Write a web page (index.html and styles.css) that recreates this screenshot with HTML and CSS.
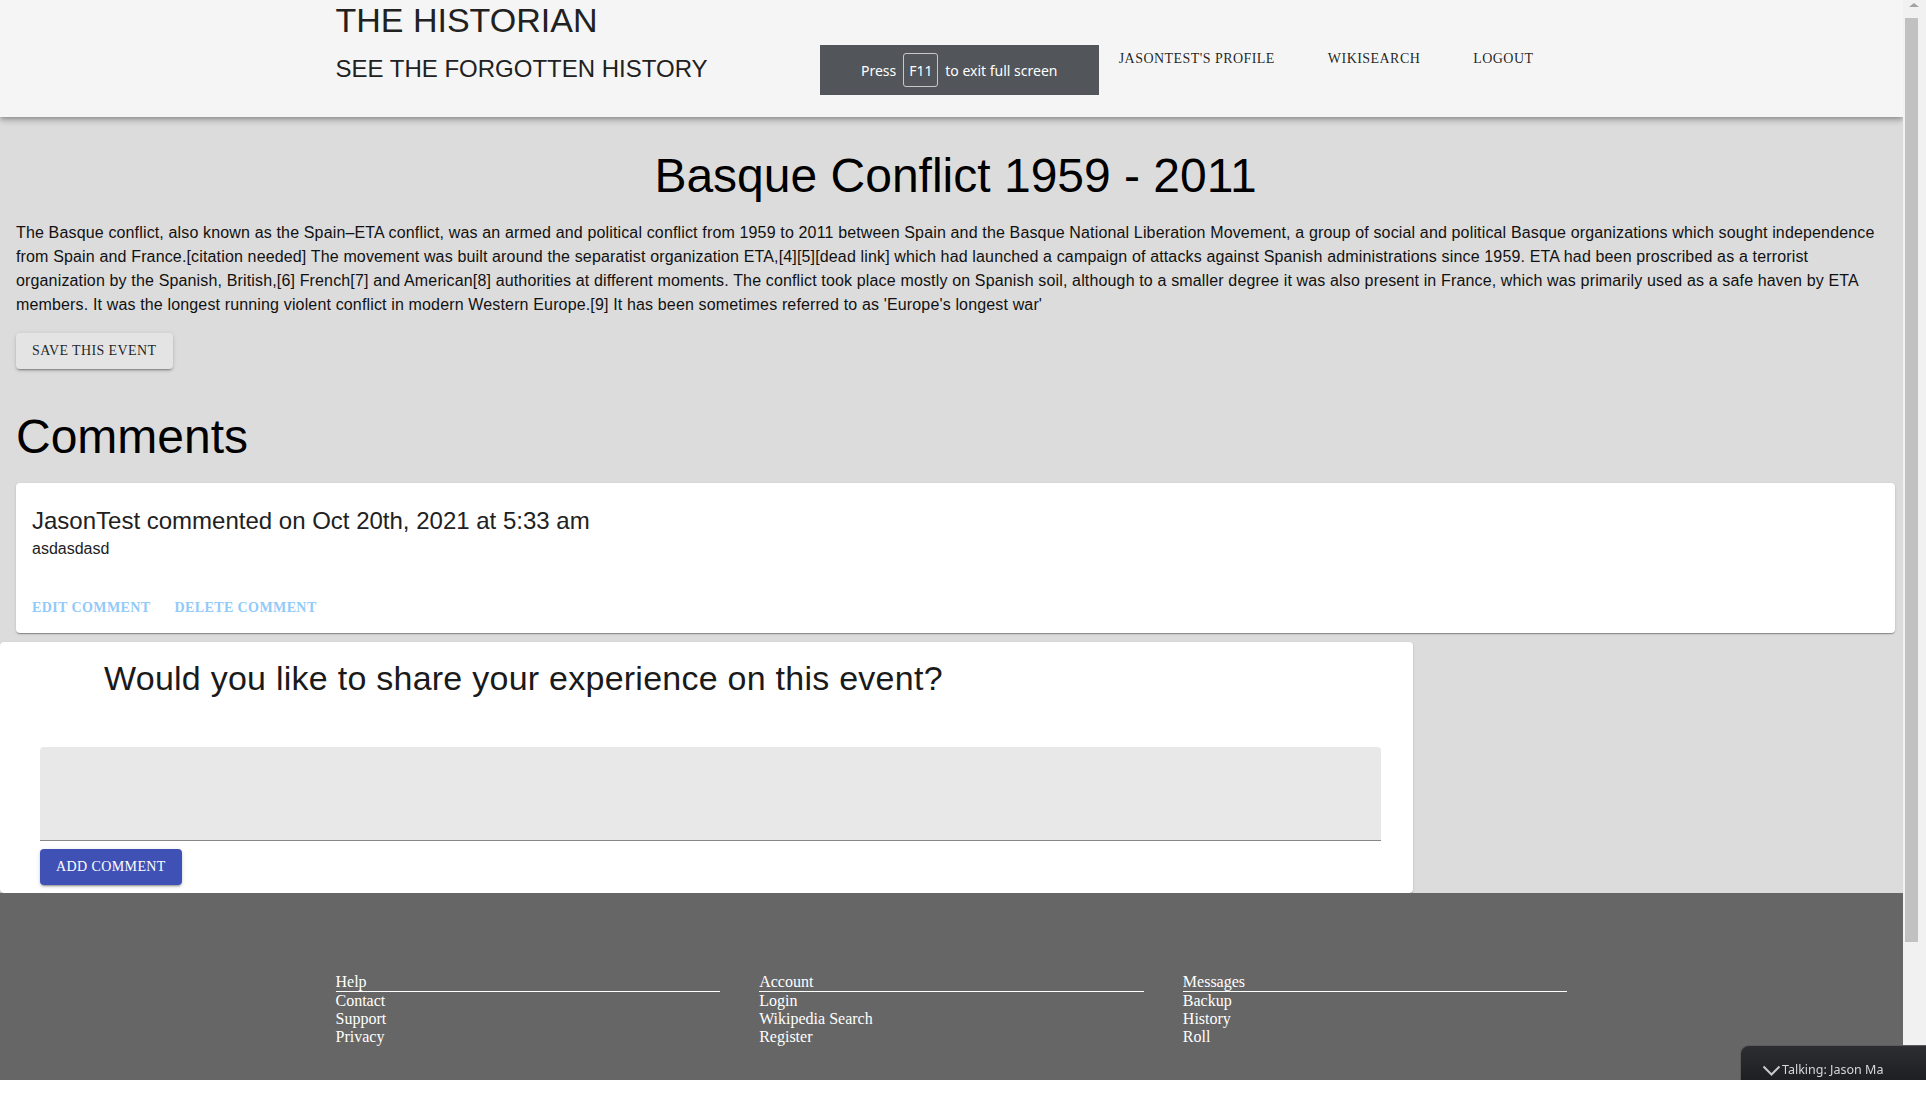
FILE: index.html
```html
<!DOCTYPE html>
<html lang="en">
<head>
<meta charset="utf-8">
<title>The Historian</title>
<link rel="stylesheet" href="styles.css">
</head>
<body>
<div class="page">
  <header class="appbar">
    <div class="container header-inner">
      <div class="brand">
        <h4 class="brand-title">THE HISTORIAN</h4>
        <h5 class="brand-sub">SEE THE FORGOTTEN HISTORY</h5>
      </div>
      <nav class="nav">
        <a class="nav-btn" href="#">Jasontest's Profile</a>
        <a class="nav-btn" href="#">Wikisearch</a>
        <a class="nav-btn" href="#">Logout</a>
      </nav>
    </div>
  </header>

  <main class="main">
    <h3 class="event-title">Basque Conflict 1959 - 2011</h3>
    <p class="event-desc">The Basque conflict, also known as the Spain–ETA conflict, was an armed and political conflict from 1959 to 2011 between Spain and the Basque National Liberation Movement, a group of social and political Basque organizations which sought independence from Spain and France.[citation needed] The movement was built around the separatist organization ETA,[4][5][dead link] which had launched a campaign of attacks against Spanish administrations since 1959. ETA had been proscribed as a terrorist organization by the Spanish, British,[6] French[7] and American[8] authorities at different moments. The conflict took place mostly on Spanish soil, although to a smaller degree it was also present in France, which was primarily used as a safe haven by ETA members. It was the longest running violent conflict in modern Western Europe.[9] It has been sometimes referred to as 'Europe's longest war'</p>
    <button class="btn-save">Save this event</button>

    <h3 class="comments-title">Comments</h3>
    <div class="card comment-card">
      <div class="comment-content">
        <h5 class="comment-head">JasonTest commented on Oct 20th, 2021 at 5:33 am</h5>
        <p class="comment-body">asdasdasd</p>
      </div>
      <div class="comment-actions">
        <button class="btn-text">Edit comment</button>
        <button class="btn-text">Delete comment</button>
      </div>
    </div>
  </main>

  <section class="card form-card">
    <h4 class="form-title">Would you like to share your experience on this event?</h4>
    <div class="field"><textarea class="field-input" aria-label="comment"></textarea></div>
    <button class="btn-primary">Add comment</button>
  </section>

  <footer class="footer">
    <div class="container footer-grid">
      <div class="footer-col">
        <div class="footer-head">Help</div>
        <a href="#">Contact</a>
        <a href="#">Support</a>
        <a href="#">Privacy</a>
      </div>
      <div class="footer-col">
        <div class="footer-head">Account</div>
        <a href="#">Login</a>
        <a href="#">Wikipedia Search</a>
        <a href="#">Register</a>
      </div>
      <div class="footer-col">
        <div class="footer-head">Messages</div>
        <a href="#">Backup</a>
        <a href="#">History</a>
        <a href="#">Roll</a>
      </div>
    </div>
  </footer>
</div>

<div class="fs-bubble">
  <span>Press</span>
  <span class="fs-key">F11</span>
  <span>to exit full screen</span>
</div>

<div class="scrollbar">
  <div class="sb-arrow"></div>
  <div class="sb-thumb"></div>
</div>

<div class="talk-widget">
  <svg class="talk-chevron" width="19" height="11" viewBox="0 0 19 11"><polyline points="1.5,1.5 9.5,9.5 17.5,1.5" fill="none" stroke="#c9c9c9" stroke-width="2"/></svg>
  <span>Talking: Jason Ma</span>
</div>
</body>
</html>
```

FILE: styles.css
```css
* { box-sizing: border-box; }

html, body {
  margin: 0;
  padding: 0;
  background: #ffffff;
}

body {
  font-family: "Liberation Sans", Arial, sans-serif;
  color: rgba(0, 0, 0, 0.87);
}

.page {
  width: calc(100% - 23px);
  background: #dcdcdc;
}

.container {
  max-width: 1280px;
  margin: 0 auto;
  padding: 0 24px;
}

/* Header */
.appbar {
  position: relative;
  z-index: 2;
  height: 117px;
  background: #f5f5f5;
  box-shadow: 0 2px 4px -1px rgba(0,0,0,0.2), 0 4px 5px 0 rgba(0,0,0,0.14), 0 1px 10px 0 rgba(0,0,0,0.12);
}

.header-inner {
  display: flex;
  align-items: flex-start;
}

.brand-title {
  margin: -1px 0 0;
  font-size: 34px;
  font-weight: 400;
  line-height: 42px;
  color: #212121;
}

.brand-sub {
  margin: 12px 0 0;
  font-size: 24px;
  font-weight: 400;
  line-height: 32px;
  color: #212121;
}

.nav {
  display: flex;
  margin-left: auto;
  margin-right: 26px;
  margin-top: 41px;
  gap: 37px;
}

.nav-btn {
  display: block;
  padding: 6px 8px;
  font-family: "Liberation Serif", "Times New Roman", serif;
  font-size: 14px;
  line-height: 24px;
  letter-spacing: 0.45px;
  text-transform: uppercase;
  text-decoration: none;
  color: rgba(0, 0, 0, 0.87);
}

/* Main */
.main {
  padding: 31px 8px 0 16px;
}

.event-title {
  margin: 0;
  text-align: center;
  font-size: 48px;
  font-weight: 400;
  line-height: 56px;
  color: #000;
}

.event-desc {
  margin: 17px 0 0;
  font-size: 16px;
  line-height: 24px;
  letter-spacing: 0.15px;
  color: #111;
}

.btn-save {
  display: block;
  margin-top: 16px;
  height: 36px;
  padding: 6px 16px;
  border: 0;
  border-radius: 4px;
  background: #e4e4e4;
  font-family: "Liberation Serif", "Times New Roman", serif;
  font-size: 14px;
  line-height: 24px;
  letter-spacing: 0.4px;
  text-transform: uppercase;
  color: rgba(0, 0, 0, 0.87);
  box-shadow: 0 3px 1px -2px rgba(0,0,0,0.2), 0 2px 2px 0 rgba(0,0,0,0.14), 0 1px 5px 0 rgba(0,0,0,0.12);
}

.comments-title {
  margin: 40px 0 0;
  font-size: 48px;
  font-weight: 400;
  line-height: 56px;
  color: #000;
}

.card {
  background: #fff;
  border-radius: 4px;
  box-shadow: 0 2px 1px -1px rgba(0,0,0,0.2), 0 1px 1px 0 rgba(0,0,0,0.14), 0 1px 3px 0 rgba(0,0,0,0.12);
}

.comment-card {
  margin-top: 18px;
  height: 150px;
}

.comment-content {
  padding: 22px 16px 20px;
}

.comment-head {
  margin: 0;
  font-size: 24px;
  font-weight: 400;
  line-height: 32px;
  color: #212121;
}

.comment-body {
  margin: 0;
  font-size: 16px;
  line-height: 24px;
  color: #212121;
}

.comment-actions {
  display: flex;
  gap: 8px;
  padding: 8px;
}

.btn-text {
  height: 36px;
  padding: 7px 8px 5px;
  border: 0;
  background: transparent;
  font-family: "Liberation Serif", "Times New Roman", serif;
  font-size: 14px;
  font-weight: 700;
  line-height: 24px;
  letter-spacing: 0.4px;
  text-transform: uppercase;
  color: #90caf9;
}

/* Comment form */
.form-card {
  margin-top: 9px;
  width: 1413px;
  padding: 15px 32px 8px 40px;
}

.form-title {
  margin: 0 0 0 64px;
  font-size: 34px;
  font-weight: 400;
  line-height: 42px;
  letter-spacing: 0.25px;
  color: #1a1a1a;
}

.field {
  margin-top: 48px;
}

.field-input {
  display: block;
  width: 100%;
  height: 94px;
  resize: none;
  border: 0;
  border-bottom: 1px solid rgba(0, 0, 0, 0.42);
  border-radius: 4px 4px 0 0;
  background: #e8e8e8;
  outline: none;
  padding: 25px 12px 8px;
  font-family: "Liberation Sans", Arial, sans-serif;
  font-size: 16px;
}

.btn-primary {
  display: block;
  margin-top: 8px;
  height: 36px;
  padding: 6px 16px;
  border: 0;
  border-radius: 4px;
  background: #3f51b5;
  color: #fff;
  font-family: "Liberation Serif", "Times New Roman", serif;
  font-size: 14px;
  line-height: 24px;
  letter-spacing: 0.4px;
  text-transform: uppercase;
  box-shadow: 0 3px 1px -2px rgba(0,0,0,0.2), 0 2px 2px 0 rgba(0,0,0,0.14), 0 1px 5px 0 rgba(0,0,0,0.12);
}

/* Footer */
.footer {
  background: #666666;
  padding: 80px 0 34px;
}

.footer-grid {
  display: grid;
  grid-template-columns: repeat(3, 1fr);
  column-gap: 39px;
}

.footer-col {
  display: flex;
  flex-direction: column;
  font-family: "Liberation Serif", "Times New Roman", serif;
  font-size: 16px;
  line-height: 18px;
  color: #fff;
}

.footer-head {
  border-bottom: 1px solid #fff;
}

.footer-col a {
  color: #fff;
  text-decoration: none;
}

/* Overlays */
.fs-bubble {
  position: fixed;
  left: 820px;
  top: 45px;
  width: 279px;
  height: 50px;
  z-index: 10;
  background: #525559;
  display: flex;
  align-items: center;
  gap: 7px;
  padding-left: 41px;
  font-family: "Noto Sans", "Open Sans", sans-serif;
  font-size: 14px;
  color: #fff;
}

.fs-key {
  display: flex;
  align-items: center;
  justify-content: center;
  width: 35px;
  height: 34px;
  border: 1px solid #c8c8c8;
  border-radius: 3px;
}

.scrollbar {
  position: fixed;
  right: 0;
  top: 0;
  width: 23px;
  height: 1080px;
  background: #f1f1f1;
  z-index: 5;
}

.sb-arrow {
  position: absolute;
  left: 6px;
  top: 3px;
  width: 0;
  height: 0;
  border-left: 5px solid transparent;
  border-right: 5px solid transparent;
  border-bottom: 4px solid #a3a3a3;
}

.sb-thumb {
  position: absolute;
  left: 2px;
  top: 18px;
  width: 13px;
  height: 924px;
  background: #c1c1c1;
}

.talk-widget {
  position: fixed;
  left: 1740px;
  right: 0;
  top: 1045px;
  height: 35px;
  z-index: 12;
  background: linear-gradient(#2d2e32, #1e1f22);
  border-top: 1px solid #5a5a5a;
  border-left: 1px solid #5a5a5a;
  border-top-left-radius: 9px;
  display: flex;
  align-items: flex-end;
  gap: 1px;
  padding: 0 0 2px 21px;
  font-family: "Noto Sans", "Open Sans", sans-serif;
  font-size: 12.5px;
  line-height: 16px;
  color: #d6d6d6;
}

.talk-chevron {
  margin-bottom: 2px;
}
```
